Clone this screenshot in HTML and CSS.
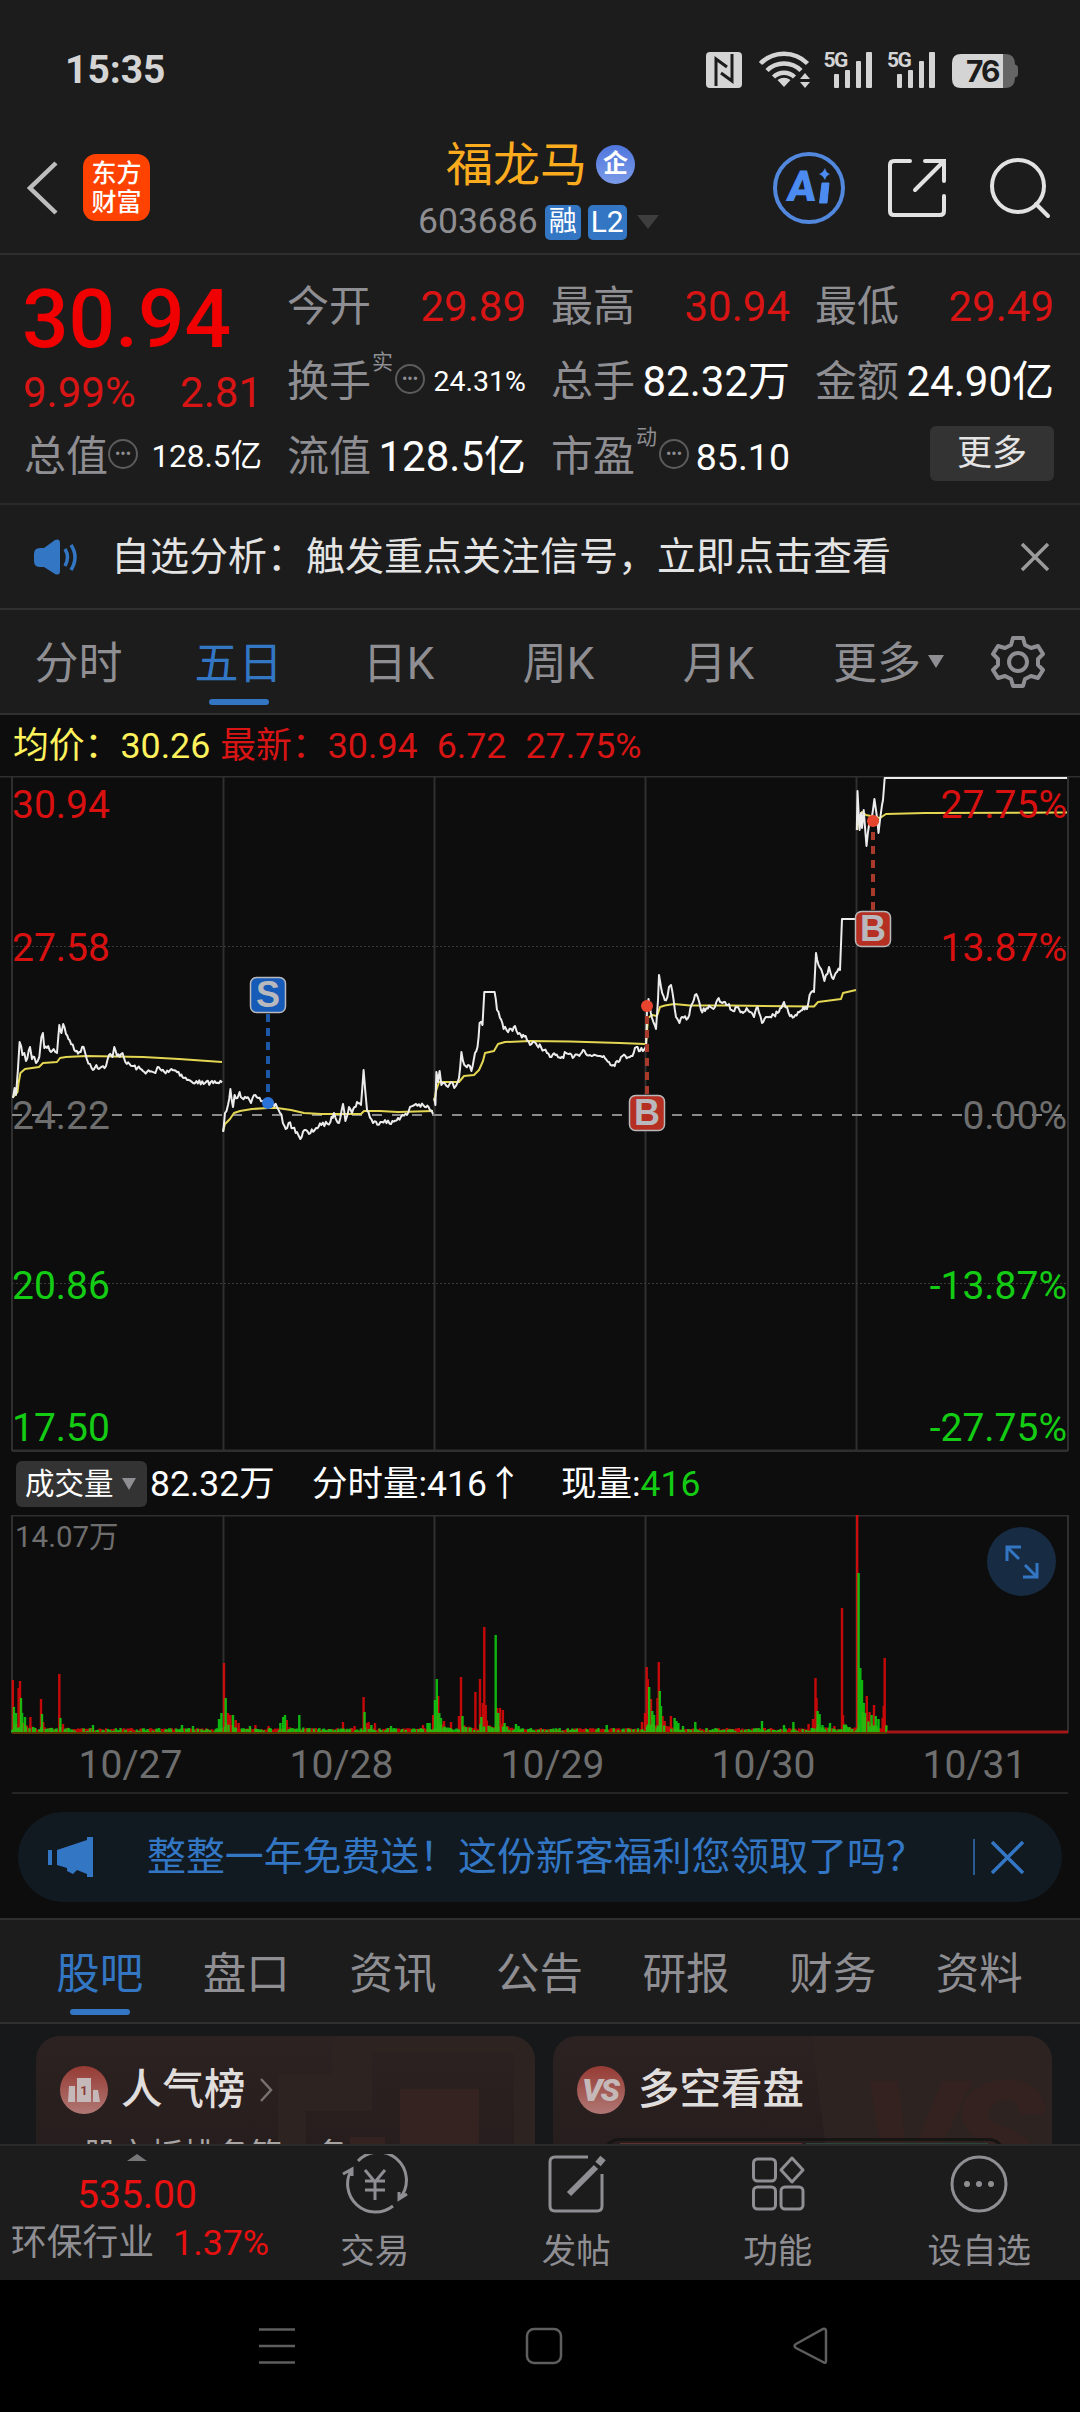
FILE: index.html
```html
<!DOCTYPE html>
<html lang="zh-CN">

<head>
    <meta charset="UTF-8">
    <meta name="viewport" content="width=device-width, initial-scale=1.0">
    <title>福龙马 603686</title>
    <link rel="stylesheet" href="styles.css">
</head>

<body>
    <div class="status-bar">
        <span class="clock">15:35</span>
        <svg class="status-icons" width="320" height="44" viewBox="700 48 320 44">
            <!-- NFC -->
            <rect x="706" y="52" width="36" height="36" rx="4" fill="#d4d4d4" />
            <path d="M716 86V59L727 67M732 54V81L721 73" fill="none" stroke="#1c1c1c" stroke-width="3" />
            <!-- wifi -->
            <g fill="none" stroke="#d4d4d4" stroke-width="4.5">
                <path d="M760.500 63.500A33 33 0 0 1 807.500 63.500" />
                <path d="M767 70.500A24 24 0 0 1 801 70.500" />
                <path d="M773.500 77A15 15 0 0 1 794.500 77" />
            </g>
            <path d="M784 87L777.500 80Q784 75.500 790.500 80ZM805 73L810 79H800ZM805 88L800 82H810Z" fill="#d4d4d4" />
            <!-- signals -->
            <g fill="#d4d4d4">
                <text x="823.500" y="67" class="net">5G</text>
                <rect x="834" y="74" width="5" height="14" rx="1" />
                <rect x="845" y="70" width="5" height="18" rx="1" />
                <rect x="856" y="61" width="5" height="27" rx="1" />
                <rect x="866" y="52" width="6" height="36" rx="1" />
                <text x="887" y="67" class="net">5G</text>
                <rect x="897" y="74" width="5" height="14" rx="1" />
                <rect x="908" y="70" width="5" height="18" rx="1" />
                <rect x="919" y="61" width="5" height="27" rx="1" />
                <rect x="929" y="52" width="6" height="36" rx="1" />
            </g>
            <!-- battery -->
            <path d="M1003 54H1006Q1015 54 1015 64.500Q1018 65 1018 68V74Q1018 77 1015 77.500Q1015 88 1006 88H1003Z" fill="#656565" />
            <path d="M961 54H1003V88H961Q952 88 952 79V63Q952 54 961 54Z" fill="#d4d4d4" />
            <text x="966" y="82" class="battery">76</text>
        </svg>
    </div>

    <header class="header">
        <div class="header-left">
            <svg class="back" width="31" height="54" viewBox="0 0 31 54">
                <path d="M29 2L3 27L29 52" fill="none" stroke="#bdbdbd" stroke-width="4.500" />
            </svg>
            <div class="logo"><span>东方</span><span>财富</span></div>
        </div>
        <div class="title">
            <div class="stock-name">福龙马<span class="corp">企</span></div>
            <div class="stock-code">603686<span class="tag">融</span><span class="tag tag-l2">L2</span><i class="arrow-down"></i></div>
        </div>
        <div class="header-icons">
            <svg width="72" height="72" viewBox="0 0 72 72">
                <circle cx="36" cy="36" r="34" fill="none" stroke="#5187dd" stroke-width="4" />
                <text x="18" y="49" class="ai-letter" transform="skewX(-6)">A</text>
                <path d="M49 31H56L54 51H46.500Z" fill="#4c8bf0" stroke="#4c8bf0" stroke-linejoin="round" />
                <path d="M52 16Q53 21 57 22Q53 23.500 52 28Q50 23.500 46 22Q50 21 52 16Z" fill="#4c8bf0" />
            </svg>
            <svg width="60" height="60" viewBox="0 0 60 60" fill="none" stroke="#e2e2e2" stroke-width="4" stroke-linecap="round">
                <path d="M23 3H7Q3 3 3 7V53Q3 57 7 57H53Q57 57 57 53V38M38 3H57V23M57 3L28 32" />
            </svg>
            <svg width="62" height="62" viewBox="0 0 62 62" fill="none" stroke="#e2e2e2" stroke-width="4" stroke-linecap="round">
                <circle cx="29" cy="29" r="26" />
                <path d="M47 47L59 59" />
            </svg>
        </div>
    </header>

    <section class="quote">
        <div class="quote-col">
            <div class="price">30.94</div>
            <div class="change"><span>9.99%</span><span>2.81</span></div>
            <div class="cell"><label>总值</label><i class="more-dot">•••</i><b class="mid">128.5亿</b></div>
        </div>
        <div class="quote-col">
            <div class="cell"><label>今开</label><b class="up">29.89</b></div>
            <div class="cell"><label>换手</label><sup>实</sup><i class="more-dot">•••</i><b class="small">24.31%</b></div>
            <div class="cell"><label>流值</label><b>128.5亿</b></div>
        </div>
        <div class="quote-col">
            <div class="cell"><label>最高</label><b class="up">30.94</b></div>
            <div class="cell"><label>总手</label><b>82.32万</b></div>
            <div class="cell"><label>市盈</label><sup>动</sup><i class="more-dot">•••</i><b class="pe">85.10</b></div>
        </div>
        <div class="quote-col">
            <div class="cell"><label>最低</label><b class="up">29.49</b></div>
            <div class="cell"><label>金额</label><b>24.90亿</b></div>
            <div class="cell"><button class="more-btn">更多</button></div>
        </div>
    </section>

    <section class="notice">
        <svg width="46" height="36" viewBox="0 0 46 36">
            <path d="M7 9H11L22 1Q27-1 27 4V32Q27 37 22 35L11 28H7Q1 28 1 22V15Q1 9 7 9Z" fill="#3276c4" />
            <path d="M32 10Q37 18 32 27M38 6Q46 18 38 31" fill="none" stroke="#3276c4" stroke-width="3.500" />
        </svg>
        <p>自选分析：触发重点关注信号，立即点击查看</p>
        <svg width="30" height="30" viewBox="0 0 30 30">
            <path d="M2 2L28 28M28 2L2 28" stroke="#9b9b9b" stroke-width="3.500" />
        </svg>
    </section>

    <nav class="period-tabs">
        <a>分时</a>
        <a class="active">五日</a>
        <a>日K</a>
        <a>周K</a>
        <a>月K</a>
        <a class="tab-more">更多<i></i></a>
        <svg width="54" height="54" viewBox="-27 -27 54 54" fill="none" stroke="#8e8e93" stroke-width="4">
            <path d="M-5-24H5L7-17L13-14L20-16L25-8L20-3V3L25 8L20 16L13 14L7 17L5 24H-5L-7 17L-13 14L-20 16L-25 8L-20 3V-3L-25-8L-20-16L-13-14L-7-17Z" stroke-linejoin="round" />
            <circle r="9" />
        </svg>
    </nav>

    <main class="chart-panel">
        <div class="legend">
            <span class="avg">均价：30.26</span>
            <span class="last">最新：30.94</span>
            <span class="last">6.72</span>
            <span class="last">27.75%</span>
        </div>

        <svg class="price-chart" width="1080" height="676" viewBox="0 0 1080 676">
            <g class="grid">
                <path d="M0 .5H1080M12 1V675M223.500 1V675M434.500 1V675M645.500 1V675M856.500 1V675M1068 1V675" />
                <path d="M12 675H1068" stroke-width="3" />
                <path d="M12 170.500H1068M12 507.500H1068" class="dotted" />
            </g>
            <path d="M12 339H1068" class="zero-line" />
            <g id="price-lines"></g>
            <g class="labels">
                <text x="12" y="42" class="up">30.94</text>
                <text x="12" y="185" class="up">27.58</text>
                <text x="12" y="353" class="flat">24.22</text>
                <text x="12" y="523" class="down">20.86</text>
                <text x="12" y="665" class="down">17.50</text>
                <g text-anchor="end">
                    <text x="1067" y="42" class="up">27.75%</text>
                    <text x="1067" y="185" class="up">13.87%</text>
                    <text x="1067" y="353" class="flat">0.00%</text>
                    <text x="1067" y="523" class="down">-13.87%</text>
                    <text x="1067" y="665" class="down">-27.75%</text>
                </g>
            </g>
            <!-- buy / sell marks -->
            <g class="mark sell">
                <path d="M268 238V327" />
                <circle cx="268" cy="327" r="6" />
                <rect x="250.500" y="201.500" width="35" height="35" rx="6" />
                <text x="268" y="231">S</text>
            </g>
            <g class="mark buy">
                <path d="M647 318V230" />
                <circle cx="647" cy="230" r="6" />
                <rect x="629.500" y="319.500" width="35" height="35" rx="6" />
                <text x="647" y="349">B</text>
            </g>
            <g class="mark buy">
                <path d="M873 134V46" />
                <circle cx="873" cy="45" r="6" />
                <rect x="855.500" y="135.500" width="35" height="35" rx="6" />
                <text x="873" y="165">B</text>
            </g>
        </svg>

        <div class="volume-info">
            <span class="pill">成交量<i></i></span>
            <span class="total">82.32万</span>
            <span class="minute">分时量:416↑</span>
            <span>现量:<em>416</em></span>
        </div>

        <div class="volume">
            <svg width="1080" height="219" viewBox="0 0 1080 219">
                <g class="grid">
                    <path d="M12 .5H1068M12 0V218M223.500 0V218M434.500 0V218M645.500 0V218M856.500 0V218M1068 0V218" />
                </g>
                <path id="vol-red" stroke="#e60808" />
                <path id="vol-green" stroke="#10d410" />
                <path d="M12 218H887" stroke="#5a3a00" stroke-width="2" />
                <path d="M887 217H1068" stroke="#a41616" stroke-width="3" />
                <text x="15" y="32" class="vol-max">14.07万</text>
            </svg>
            <button class="expand">
                <svg width="34" height="34" viewBox="0 0 34 34" fill="none" stroke="#3276c4" stroke-width="3">
                    <path d="M2 16V2H16M2 2L14 14M32 18V32H18M32 32L20 20" />
                </svg>
            </button>
        </div>

        <div class="dates">
            <span>10/27</span><span>10/28</span><span>10/29</span><span>10/30</span><span>10/31</span>
        </div>

        <div class="promo">
            <svg width="46" height="40" viewBox="0 0 46 40">
                <path d="M0 13H4V28H0ZM9 13L39 3V0H45V40H39V37L29 33L25 37L19 34V31L9 28Z" fill="#3276c4" />
            </svg>
            <p>整整一年免费送！这份新客福利您领取了吗？</p>
            <i class="divider"></i>
            <svg width="33" height="33" viewBox="0 0 33 33">
                <path d="M1 1L32 32M32 1L1 32" stroke="#3276c4" stroke-width="3.500" />
            </svg>
        </div>
    </main>

    <nav class="info-tabs">
        <a class="active">股吧</a>
        <a>盘口</a>
        <a>资讯</a>
        <a>公告</a>
        <a>研报</a>
        <a>财务</a>
        <a>资料</a>
    </nav>

    <section class="cards">
        <div class="card">
            <svg class="card-bg" width="499" height="120" viewBox="0 0 499 120">
                <path d="M296 0H499V120H242V38H296ZM336 17V75H270V120H478V17Z" fill="#2d2321" fill-rule="evenodd" />
                <path d="M364 53H443V108H364ZM314 101H349V108H314Z" fill="#352321" />
            </svg>
            <h3>
                <svg width="48" height="48" viewBox="0 0 48 48">
                    <circle cx="24" cy="24" r="24" fill="url(#red)" />
                    <path d="M9 20H15V36H8ZM17 12H31V36H17ZM33 24H38L40 36H33Z" fill="#c4b9b8" />
                    <text x="24" y="29" class="rank">1</text>
                    <defs>
                        <linearGradient id="red" x2="0" y2="1">
                            <stop stop-color="#963b34" />
                            <stop offset="1" stop-color="#b07774" />
                        </linearGradient>
                    </defs>
                </svg>
                人气榜
                <svg class="chevron" width="14" height="24" viewBox="0 0 14 24">
                    <path d="M2 1L12 12L2 23" fill="none" stroke="#77716f" stroke-width="2.500" />
                </svg>
            </h3>
            <p>股市板排名第一名</p>
        </div>
        <div class="card">
            <svg class="card-bg" width="499" height="120" viewBox="0 0 499 120">
                <path d="M258 0H499V120H274Z" fill="#2d2321" />
                <text x="306" y="158" class="vs-big">VS</text>
            </svg>
            <h3>
                <svg width="48" height="48" viewBox="0 0 48 48">
                    <circle cx="24" cy="24" r="24" fill="url(#red)" />
                    <text x="23" y="35" class="vs">VS</text>
                </svg>
                多空看盘
            </h3>
            <div class="vote"><i class="vote-up"></i><i class="vote-down"></i></div>
        </div>
    </section>

    <footer class="toolbar">
        <div class="index">
            <i class="arrow-up"></i>
            <span class="index-value">535.00</span>
            <span class="index-name">环保行业<b>1.37%</b></span>
        </div>
        <div class="tool">
            <svg width="66" height="60" viewBox="-33 -30 66 60">
                <path d="M-17-23A28 28 0 0 1 25 14M18 22A28 28 0 0 1-23-15M-32-10L-23-15V-8M32 10L24 15V8" />
                <path d="M-10-14L0-2L10-14M0-2V16M-10-3H10M-10 6H10" />
            </svg>
            <span>交易</span>
        </div>
        <div class="tool">
            <svg width="66" height="60" viewBox="-33 -30 66 60">
                <path d="M12-27H-21Q-26-27-26-22V22Q-26 27-21 27H21Q26 27 26 22V-10" />
                <path d="M20-17L-4 7L-7 10" stroke-width="6" />
                <path d="M22-20L27-26" stroke-width="7" />
            </svg>
            <span>发帖</span>
        </div>
        <div class="tool">
            <svg width="66" height="60" viewBox="-33 -30 66 60">
                <rect x="-24.500" y="-25" width="22" height="22" rx="4" />
                <path d="M14-26L25-14L14-2L3-14Z" stroke-linejoin="round" />
                <rect x="-24.500" y="3" width="22" height="22" rx="4" />
                <rect x="3" y="3" width="22" height="22" rx="4" />
            </svg>
            <span>功能</span>
        </div>
        <div class="tool">
            <svg width="66" height="60" viewBox="-33 -30 66 60">
                <circle r="27" />
                <g fill="#8e8e93" stroke="none">
                    <circle cx="-12" r="3" />
                    <circle r="3" />
                    <circle cx="12" r="3" />
                </g>
            </svg>
            <span>设自选</span>
        </div>
    </footer>

    <div class="system-nav">
        <svg width="38" height="38" viewBox="0 0 38 38"><path d="M1 2.500H37M1 19H37M1 35.500H37" /></svg>
        <svg width="38" height="38" viewBox="0 0 38 38"><rect x="2" y="2" width="34" height="34" rx="7" /></svg>
        <svg width="38" height="38" viewBox="0 0 38 38"><path d="M34 4V34Q34 37 31 35L4 21Q1 19 4 17L31 2Q34 1 34 4Z" /></svg>
    </div>

    <script src="chart.js"></script>
</body>

</html>
```
FILE: styles.css
```css
* {
    box-sizing: border-box;
}

body {
    margin: 0;
    width: 1080px;
    height: 2412px;
    overflow: hidden;
    background-color: #1c1c1c;
    color: #8e8e93;
    font-family: Roboto, "Noto Sans CJK SC", sans-serif;
    line-height: 1;
}

p,
h3 {
    margin: 0;
}

i,
em {
    font-style: normal;
}

button {
    border: none;
    padding: 0;
    font-family: inherit;
}

svg {
    display: block;
    flex: none;
}

/* status bar */
.status-bar {
    height: 140px;
    padding: 0 60px 0 65px;
    display: flex;
    align-items: center;
    justify-content: space-between;
}

.clock {
    color: #d4d4d4;
    font-size: 39px;
    font-weight: 700;
}

.net {
    font-size: 21px;
    font-weight: 700;
    letter-spacing: -1.5px;
}

.battery {
    font-family: Inter, sans-serif;
    font-size: 30px;
    font-weight: 700;
    letter-spacing: -2px;
    fill: #1c1c1c;
}

/* header */
.header {
    height: 115px;
    border-bottom: 2px solid #2e2e2e;
    padding: 0 29px 0 27px;
    display: grid;
    grid-template-columns: 351px 1fr 278px;
}

.header-left,
.header-icons {
    display: flex;
    align-items: center;
    height: 95px;
}

.header-icons {
    justify-content: space-between;
}

.logo {
    width: 67px;
    height: 67px;
    margin-left: 25px;
    border-radius: 13px;
    background-color: #ff4200;
    color: #fff;
    font-size: 25px;
    font-weight: 500;
    display: flex;
    flex-direction: column;
    align-items: center;
    justify-content: center;
    gap: 4px;
}

.title {
    display: flex;
    flex-direction: column;
}

.stock-name {
    height: 48px;
    padding-left: 68px;
    display: flex;
    align-items: center;
    color: #fbab1e;
    font-size: 47px;
}

.corp {
    width: 39px;
    height: 39px;
    margin-left: 9px;
    border-radius: 50%;
    background: linear-gradient(#4f76dd, #7b9be8);
    color: #fff;
    font-size: 25px;
    font-weight: 700;
    line-height: 37px;
    text-align: center;
}

.stock-code {
    height: 68px;
    padding-left: 40px;
    display: flex;
    align-items: center;
    font-size: 35.5px;
}

.tag {
    width: 36px;
    height: 35px;
    margin-left: 7px;
    border-radius: 5px;
    background-color: #3276c4;
    color: #fff;
    font-size: 28px;
    line-height: 34px;
    text-align: center;
}

.tag-l2 {
    width: 39px;
    font-size: 30px;
}

.arrow-down {
    margin-left: 10px;
    border: 11px solid transparent;
    border-top: 14px solid #3e3e3e;
    border-bottom: 0;
}

.ai-letter {
    font-size: 43px;
    font-weight: 900;
    fill: #4c8bf0;
}

/* quote */
.quote {
    height: 250px;
    padding: 14px 25px 0 24px;
    border-bottom: 2px solid #2a2a2a;
    display: grid;
    grid-template-columns: 238px 239px 239px 239px;
    column-gap: 25px;
}

.quote-col {
    display: flex;
    flex-direction: column;
}

.price {
    height: 98px;
    margin-left: -2px;
    color: #f00000;
    font-size: 82px;
    font-weight: 500;
    line-height: 100px;
}

.change {
    height: 52px;
    margin-left: -1px;
    display: flex;
    align-items: center;
    justify-content: space-between;
    color: #d81414;
    font-size: 42px;
}

.cell {
    height: 75px;
    display: flex;
    align-items: center;
    font-size: 42px;
    line-height: 44px;
    white-space: nowrap;
}

.cell b {
    margin-left: auto;
    color: #fff;
    font-weight: 400;
}

.cell .up {
    color: #d81414;
}

.cell .mid {
    font-size: 31.5px;
}

.cell .small {
    font-size: 28.5px;
}

.cell .pe {
    font-size: 37.5px;
}

.cell sup {
    margin: 0 2px 0 1px;
    align-self: flex-start;
    padding-top: 8px;
    font-size: 21px;
    line-height: 1;
}

.more-dot {
    width: 30px;
    height: 30px;
    margin-top: -6px;
    border: 2px solid #5c5c5f;
    border-radius: 50%;
    font-size: 16px;
    line-height: 26px;
    display: flex;
    justify-content: center;
}

.more-btn {
    width: 124px;
    height: 55px;
    margin-left: auto;
    margin-top: -6px;
    border-radius: 6px;
    background-color: #333;
    color: #e4e4e4;
    font-size: 35px;
    line-height: 50px;
}

/* notice */
.notice {
    height: 105px;
    padding: 0 30px 0 33px;
    border-bottom: 2px solid #303030;
    display: flex;
    align-items: center;
}

.notice p {
    flex: 1;
    margin-left: 32px;
    color: #e4e4e4;
    font-size: 39px;
    line-height: 42px;
}

/* tabs */
.period-tabs {
    height: 105px;
    padding-right: 35px;
    border-bottom: 2px solid #303030;
    display: flex;
    align-items: center;
    font-size: 44px;
}

.period-tabs a {
    position: relative;
    width: 160px;
    height: 103px;
    padding-right: 3px;
    line-height: 108px;
    text-align: center;
}

.period-tabs .tab-more {
    width: 191px;
    padding-left: 33px;
    text-align: left;
}

.tab-more i {
    display: inline-block;
    margin-left: 7px;
    margin-bottom: 11px;
    border: 8px solid transparent;
    border-top: 13px solid #8e8e93;
    border-bottom: 0;
}

.period-tabs .active,
.info-tabs .active {
    color: #3276c4;
}

.active::after {
    content: "";
    position: absolute;
    left: 50%;
    bottom: 8px;
    width: 60px;
    height: 6px;
    margin-left: -31px;
    border-radius: 3px;
    background-color: #3276c4;
}

/* charts */
.chart-panel {
    height: 1203px;
    background-color: #0d0d0d;
}

.legend {
    height: 61px;
    padding-left: 13px;
    display: flex;
    align-items: center;
    font-size: 35.8px;
    line-height: 40px;
}

.avg {
    margin-right: 10px;
    color: #fff25c;
}

.last {
    margin-right: 19px;
    color: #d81414;
}

.grid {
    fill: none;
    stroke: #2f2f2f;
    stroke-width: 2;
}

.grid .dotted {
    stroke: #3a3a3a;
    stroke-width: 1;
    stroke-dasharray: 2 2;
}

.zero-line {
    stroke: #8a8a8a;
    stroke-width: 2;
    stroke-dasharray: 10 10;
}

.labels {
    font-size: 39px;
}

.labels .up {
    fill: #d81010;
}

.labels .down {
    fill: #14cc14;
}

.labels .flat {
    fill: #6e6e6e;
}

.line {
    fill: none;
    stroke: #ececec;
    stroke-width: 2;
    stroke-linejoin: round;
}

.line-avg {
    stroke: #e3d653;
}

.mark path {
    stroke-width: 4;
    stroke-dasharray: 8 6;
}

.mark rect {
    stroke: #b9b9bd;
    stroke-width: 1.5;
}

.mark text {
    fill: #b9b9bd;
    font-size: 36px;
    font-weight: 700;
    text-anchor: middle;
    font-family: "Liberation Sans", sans-serif;
}

.sell path {
    stroke: #1c57a8;
}

.sell circle {
    fill: #2a72d8;
}

.sell rect {
    fill: #175bb8;
}

.buy path {
    stroke: #a83a2c;
}

.buy circle {
    fill: #e8452f;
}

.buy rect {
    fill: #b53022;
}

.volume-info {
    height: 63px;
    padding-left: 16px;
    display: flex;
    align-items: center;
    color: #fff;
    font-size: 35.5px;
    line-height: 40px;
}

.volume-info em {
    color: #14cc14;
}

.pill {
    width: 131px;
    height: 46px;
    padding-left: 9px;
    border-radius: 6px;
    background-color: #333;
    display: flex;
    align-items: center;
    font-size: 29.5px;
}

.pill i {
    margin-left: 8px;
    border: 7.5px solid transparent;
    border-top: 12px solid #8e8e93;
    border-bottom: 0;
}

.total {
    width: 162px;
    padding-left: 3px;
}

.minute {
    width: 252px;
    padding-left: 3px;
}

.volume {
    position: relative;
    height: 219px;
}

#vol-red,
#vol-green {
    fill: none;
    stroke-width: 2.4;
    opacity: .85;
}

.vol-max {
    font-size: 29.5px;
    fill: #6e6e6e;
}

.expand {
    position: absolute;
    top: 12px;
    right: 24px;
    width: 69px;
    height: 69px;
    border-radius: 50%;
    background-color: #172b42;
    display: flex;
    align-items: center;
    justify-content: center;
}

.dates {
    height: 60px;
    margin: 0 12px;
    padding-left: 13px;
    border-bottom: 2px solid #252525;
    display: flex;
    color: #6e6e6e;
    font-size: 39px;
    line-height: 62px;
}

.dates span {
    flex: none;
    width: 211px;
    text-align: center;
}

.promo {
    height: 90px;
    margin: 18px;
    padding: 0 38px 0 30px;
    border-radius: 45px;
    background-color: #111921;
    display: flex;
    align-items: center;
    color: #3276c4;
}

.promo p {
    flex: 1;
    margin-left: 53px;
    font-size: 38.9px;
}

.divider {
    width: 2px;
    height: 36px;
    margin-right: 16px;
    background-color: #285a94;
}

.info-tabs {
    height: 106px;
    padding: 0 27px;
    border-top: 2px solid #303030;
    border-bottom: 2px solid #303030;
    display: flex;
    font-size: 43.5px;
}

.info-tabs a {
    position: relative;
    flex: 1;
    height: 102px;
    padding-right: 1px;
    line-height: 110px;
    text-align: center;
}

.info-tabs .active::after {
    bottom: 7px;
    margin-left: -30px;
}

/* cards */
.cards {
    height: 120px;
    padding: 12px 28px 0 36px;
    overflow: hidden;
    background-color: #17181a;
    display: flex;
    gap: 18px;
}

.card {
    position: relative;
    width: 499px;
    height: 160px;
    padding: 30px 24px;
    border-radius: 24px;
    overflow: hidden;
    background: linear-gradient(#2b2221, #251b1c);
}

.card-bg {
    position: absolute;
    top: 0;
    left: 0;
}

.card h3 {
    position: relative;
    height: 48px;
    display: flex;
    align-items: center;
    gap: 13px;
    color: #e0dddd;
    font-size: 41.5px;
    font-weight: 500;
}

.card p {
    position: relative;
    margin: 25px 0 0 24px;
    color: #a9a5a4;
    font-size: 33px;
}

.rank {
    font-size: 13px;
    font-weight: 700;
    text-anchor: middle;
    fill: #8b3b35;
}

.vs {
    font-size: 32px;
    font-weight: 900;
    font-style: italic;
    letter-spacing: -2px;
    text-anchor: middle;
    fill: #c4b9b8;
}

.vs-big {
    font-size: 160px;
    font-weight: 900;
    font-style: italic;
    letter-spacing: -14px;
    fill: #332220;
}

.vote {
    position: relative;
    width: 402px;
    height: 60px;
    margin: 24px 0 0 26px;
    padding: 5px 14px;
    border: 3px solid #171414;
    border-radius: 16px;
    display: flex;
    gap: 4px;
}

.vote i {
    flex: 1;
    height: 30px;
    margin-top: -3px;
    background-color: #5e322f;
}

.vote .vote-down {
    background-color: #2b453d;
}

/* bottom toolbar */
.toolbar {
    height: 136px;
    border-top: 2px solid #2a2a2a;
    display: grid;
    grid-template-columns: 274px repeat(4, 201.5px);
}

.index {
    display: flex;
    flex-direction: column;
    align-items: center;
    padding-top: 8px;
}

.arrow-up {
    border: 10.5px solid transparent;
    border-top: 0;
    border-bottom: 7px solid #77777a;
}

.index-value {
    margin-top: 15px;
    color: #e81010;
    font-size: 39px;
}

.index-name {
    margin-top: 11px;
    padding-left: 6px;
    font-size: 35.8px;
    white-space: nowrap;
}

.index-name b {
    margin-left: 19px;
    color: #e81010;
    font-weight: 400;
}

.tool {
    padding-top: 8px;
    display: flex;
    flex-direction: column;
    align-items: center;
    gap: 20px;
    font-size: 34.5px;
}

.tool svg {
    fill: none;
    stroke: #8e8e93;
    stroke-width: 3;
}

.system-nav {
    height: 132px;
    padding: 0 250px 0 258px;
    background-color: #000;
    display: flex;
    align-items: center;
    justify-content: space-between;
}

.system-nav svg {
    fill: none;
    stroke: #5e5e5e;
    stroke-width: 2.5;
}
```
FILE: chart.js
```js
// five trading days, "x,y" points in chart coordinates
const prices = [
    "13,322 14.6,312 16,319 17.9,294 19.6,266 22.5,279 24.3,277 26,285 30,271 32,283 34.3,281 36,287 39.3,281 41.4,261 42.9,257 44.3,272 48.2,270 51,276 53.6,273 57,277 59.3,249 61.4,257 63.2,248 66,258 69.6,264 74.3,274 79.3,276 83.6,271 86.8,283 90,288 92.9,294 96.4,289 100,292 106,290 109,279 112.5,281 114.3,271 117,280 122.5,277 126.8,288 137.5,292 142.9,295 155.4,297 157.5,291 164.3,296 171.4,293 178.6,296 184,302 193,307 196.4,305 203.6,308 210.7,306 216,307 222,306.5",
    "223.2,356 225,337 228,329 230.4,313 233,331 234.6,319 237.5,322 239.6,316 242,322 246.4,322 251,327 255.4,319 258,322 262.5,325 268,324 273,327 277,331 280,337 285.7,353 288.6,347 293,352 297,356 300.4,363 304.3,354 309,358 316,352 321.4,349 330.4,346 334,337 339,347 343,328 345.4,345 349,331 352,337 357,326 361,329 363.6,294 367,334 373,347 380.4,346 385,344 391,348 398,342 407,339 410,331 416,328 425,331 428.6,331 433,338",
    "434.3,322 435.4,329 436.4,296 438,306 439.6,295 441.4,309 444.6,307 448,311 451,306 454.3,312 459,302 461.4,276 464.3,289 468,289 471.4,295 475,277 477.5,271 479.6,247 482.5,249 484.3,216 494.6,216 497,234 500,242 503.6,253 512.5,255 515,250 518,258 525.7,260 530,269 535.7,267 541,271 547,277 550,281 555.5,279 560.7,282 566,277 572.7,282 578,279 583,274 590,279 598.5,280 603.7,280 609,286 613.3,289 621,281 631,280 636.4,271 640,275 645.7,271",
    "646,271 647,234 648.5,223 652,242 656,253 658,224 659,199 661,211 664.7,224 667.4,221 669,211 671,209 673.6,224 676,241 679.5,247 682,241 688,242 691.5,229 695,219 697.7,221 701,234 705,235 710.5,231 715,231 718.7,222 722.5,227 727.7,229 733,235 738,231 743,237 746.6,232 752,237 754,241 757.6,231 762,247 767,241 774,239 777.6,237 784,226 788.6,237 794,241 798,236 803.4,231 807,233 809.6,219 814,216 816,177 819.6,191 824.4,205 829,191 833.4,203 837,196 840,194 842,143 856,143",
    "856.8,54 857.5,15 859.6,54 861,37 862,52 863.7,34 866.5,70 869,49 871,47 873,34 874.4,23 876.4,37 878.5,57 880,44 882,29 883,24 884.7,2 1067,2"
];

const averages = [
    "13,321 17.5,316 18.6,307 20.4,297 25,293 39,291 43,287 57,286 60,282 66,281 86,280 143,281 179,283 222,286",
    "223,355 225,348 230,343 234,337 240,335 252,333 268,332 277,332 291,334 304,337 321,338 361,338 364,335 380,335 398,336 433,335",
    "434.3,325 436,315 439,306 459,306 464,300 474,299 479,294 483,285 485,277 494,275 498,268 505,266 530,265 570,265.5 620,267 645,268",
    "646,270 648,242 652,239 657,240 660,231 665,229.5 674,228 690,229.5 730,229.5 814,230.5 818,226 841,223 843,217 856,214",
    "857,54 859,42 862,36 866,39 880,42 886,38 925,37 1067,36.5"
];

// [x, height, r|g]
const volumes = [
    [12.900, 53, 'r'], [13.900, 26, 'g'], [16, 20, 'g'], [18.600, 45, 'r'], [20, 52, 'r'], [21, 35, 'g'], [22.100, 20, 'g'], [25, 16, 'g'], [30.400, 16, 'r'],
    [41, 34, 'r'], [42, 19, 'g'], [43.200, 11, 'r'], [59.300, 59, 'r'], [60.400, 15, 'g'], [63, 9, 'r'], [93, 8, 'g'], [182, 8, 'g'], [193, 7, 'g'],
    [219, 14, 'g'], [221.400, 20, 'g'], [224, 70, 'r'], [225.700, 35, 'g'], [228, 20, 'r'], [230.400, 18, 'r'], [233, 18, 'g'], [235.700, 13, 'r'], [238.600, 10, 'r'],
    [250, 7, 'g'], [255.400, 8, 'r'], [268.600, 7, 'r'], [280.400, 10, 'g'], [283.200, 16, 'g'], [285, 18, 'g'], [286.800, 13, 'r'], [299.300, 18, 'g'],
    [343, 11, 'r'], [354.600, 7, 'r'], [363.600, 36, 'r'], [364.600, 21, 'g'], [366.800, 10, 'r'], [368.600, 11, 'r'], [371.400, 8, 'g'], [375, 10, 'r'], [391, 7, 'g'],
    [423, 8, 'r'], [427.500, 10, 'g'], [429.600, 10, 'g'], [433.200, 18, 'r'], [435, 33, 'g'], [436.800, 54, 'g'], [438.200, 37, 'r'], [439.300, 20, 'g'], [441, 15, 'g'],
    [444, 12, 'r'], [451, 11, 'r'], [459, 17, 'r'], [461, 56, 'r'], [462.500, 17, 'g'], [475.400, 41, 'r'], [480, 54, 'r'], [481.400, 16, 'g'], [482.900, 30, 'r'],
    [484.300, 106, 'r'], [485.700, 28, 'r'], [495.700, 98, 'g'], [497, 25, 'r'], [498.200, 20, 'g'], [500, 25, 'r'], [502.900, 23, 'r'], [504.600, 10, 'g'],
    [516, 9, 'g'], [518.600, 7, 'g'], [606.700, 8, 'g'], [642, 11, 'r'], [645, 20, 'r'], [646.700, 66, 'r'], [647.800, 54, 'r'], [649.200, 46, 'g'], [651, 34, 'r'],
    [652.300, 22, 'g'], [654, 18, 'g'], [657.400, 35, 'r'], [658.800, 71, 'r'], [659.800, 42, 'g'], [661, 27, 'g'], [662.600, 17, 'r'], [664.700, 12, 'r'],
    [670.900, 17, 'r'], [674.600, 15, 'g'], [676.400, 12, 'g'], [678.400, 10, 'g'], [683, 7, 'g'], [695.300, 11, 'g'], [762, 12, 'g'], [784, 8, 'g'], [793.400, 11, 'g'],
    [808.600, 9, 'r'], [813, 14, 'r'], [815.500, 55, 'r'], [816.500, 35, 'r'], [817.600, 22, 'g'], [819.600, 19, 'g'], [822.400, 8, 'g'], [830, 10, 'g'], [834.400, 7, 'r'],
    [842, 125, 'r'], [843, 18, 'r'], [857.200, 218, 'r'], [858.600, 160, 'g'], [860.300, 65, 'g'], [862, 53, 'g'], [863.700, 30, 'g'], [865, 20, 'g'], [866.800, 37, 'r'],
    [869.600, 21, 'r'], [871.600, 18, 'g'], [874, 28, 'r'], [875.800, 17, 'g'], [878.500, 14, 'g'], [882.600, 15, 'r'], [883.700, 27, 'r'], [884.700, 75, 'r'], [886, 8, 'r']
];

let seed = 7;
function rand() {
    seed = (seed * 16807) % 2147483647;
    return seed / 2147483647;
}

// adds small ticks between the points so the line looks like minute data
function tickLine(text) {
    const points = text.split(' ').map(p => p.split(',').map(Number));
    let out = points[0].join(',');
    for (let i = 1; i < points.length; i++) {
        const [x0, y0] = points[i - 1];
        const [x1, y1] = points[i];
        const steps = x1 - x0 > 40 || (y0 === y1 && x1 - x0 > 9) ? 1 : Math.max(1, Math.round((x1 - x0) / 1.4));
        for (let s = 1; s < steps; s++) {
            const t = s / steps;
            out += ` ${(x0 + (x1 - x0) * t).toFixed(1)},${(y0 + (y1 - y0) * t + (rand() - 0.5) * 5).toFixed(1)}`;
        }
        out += ` ${x1},${y1}`;
    }
    return out;
}

function drawPrices() {
    let html = '';
    averages.forEach(points => {
        html += `<polyline class="line line-avg" points="${points}" />`;
    });
    prices.forEach(points => {
        html += `<polyline class="line" points="${tickLine(points)}" />`;
    });
    document.getElementById('price-lines').innerHTML = html;
}

function drawVolumes() {
    const paths = { r: '', g: '' };
    for (let x = 12.5; x < 887; x += 0.9) {
        let height = 2 + rand() * 3;
        // volume fades out after a peak
        volumes.forEach(([vx, vh]) => {
            if (x > vx && x - vx < 14 && vh > 15) {
                height += vh * 0.08 * rand() * Math.exp((vx - x) / 6);
            }
        });
        paths[rand() > 0.4 ? 'r' : 'g'] += `M${x.toFixed(1)} 218v-${height.toFixed(1)}`;
    }
    volumes.forEach(([x, height, color]) => {
        paths[color] += `M${x} 218v-${height}`;
    });
    document.getElementById('vol-red').setAttribute('d', paths.r);
    document.getElementById('vol-green').setAttribute('d', paths.g);
}

drawPrices();
drawVolumes();
```
